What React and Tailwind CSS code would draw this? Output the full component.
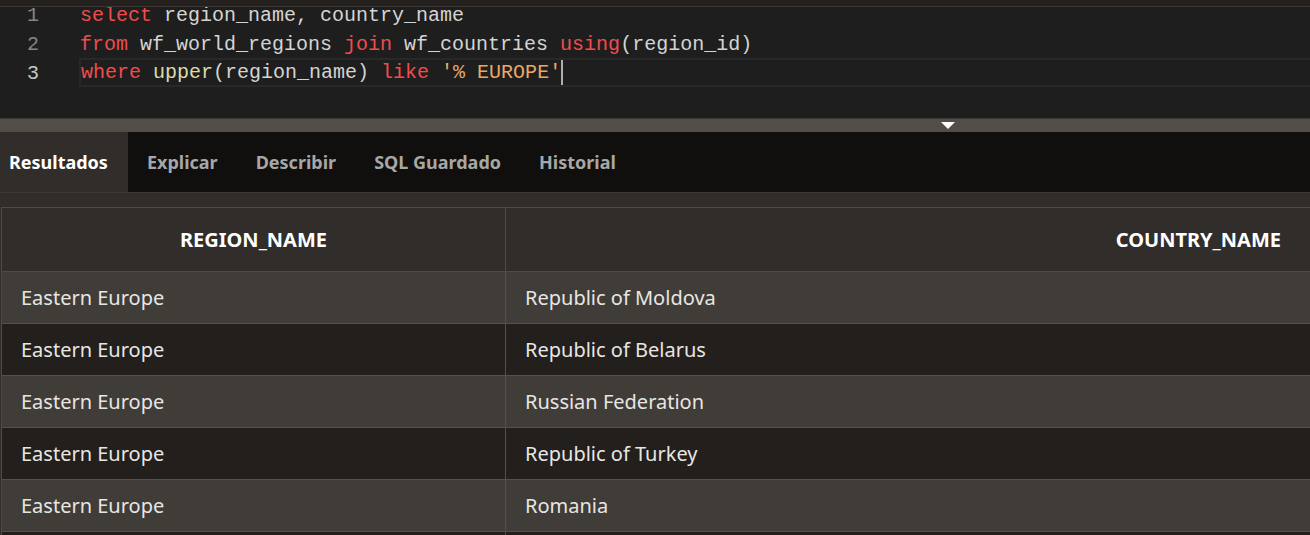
import React from "react";

const mono = { fontFamily: '"Liberation Mono", "DejaVu Sans Mono", monospace' };
const sans = { fontFamily: '"Noto Sans", "Open Sans", sans-serif' };

const K = ({ children }) => <span className="text-[#f14c4c]">{children}</span>;
const I = ({ children }) => <span className="text-[#d4d4d4]">{children}</span>;

const rows = [
  ["Eastern Europe", "Republic of Moldova"],
  ["Eastern Europe", "Republic of Belarus"],
  ["Eastern Europe", "Russian Federation"],
  ["Eastern Europe", "Republic of Turkey"],
  ["Eastern Europe", "Romania"],
  ["", ""],
];

export default function App() {
  return (
    <div className="w-[1310px] h-[535px] overflow-hidden bg-[#312d2a] flex flex-col">
      {/* Editor */}
      <div className="h-[118px] bg-[#1e1e1e] flex flex-col shrink-0 relative">
        <div className="h-[7px] bg-[#24211f] border-b border-[#3a3734] relative z-10 shrink-0" />
        <div className="-mt-[6px] text-[20px] leading-[29px]" style={mono}>
          <div className="flex h-[29px]">
            <div className="w-[39px] text-right text-[#858585]">1</div>
            <div className="ml-[41px] whitespace-pre">
              <K>select</K><I> region_name, country_name</I>
            </div>
          </div>
          <div className="flex h-[29px]">
            <div className="w-[39px] text-right text-[#858585]">2</div>
            <div className="ml-[41px] whitespace-pre">
              <K>from</K><I> wf_world_regions </I><K>join</K><I> wf_countries </I><K>using</K><I>(region_id)</I>
            </div>
          </div>
          <div className="flex h-[29px] -mt-[1px]">
            <div className="w-[39px] text-right text-[#c6c6c6] pt-[1px]">3</div>
            <div className="ml-[40px] flex-1 border-2 border-r-0 border-[#282828] whitespace-pre leading-[25px] flex items-center">
              <K>where</K><I> </I><span className="text-[#dcdcaa]">upper</span><I>(region_name) </I><K>like</K><I> </I><span className="text-[#e9a866]">'% EUROPE'</span>
              <span className="inline-block w-[2px] h-[25px] bg-[#aeafad]" />
            </div>
          </div>
        </div>
      </div>

      {/* Splitter */}
      <div className="h-[14px] bg-[#524d47] border-t border-[#3e3a36] flex items-start pl-[941px] shrink-0">
        <svg width="14" height="8" viewBox="0 0 14 8" className="mt-[3px]">
          <polygon points="0,0 14,0 7,7" fill="#ffffff" />
        </svg>
      </div>

      {/* Tabs */}
      <div className="h-[60px] bg-[#100f0d] flex items-stretch shrink-0 text-[18px] font-bold" style={sans}>
        <div className="bg-[#312d2a] pl-[9px] pr-[20px] flex items-center text-white">Resultados</div>
        <div className="px-[19px] flex items-center text-[#a7a7a7]">Explicar</div>
        <div className="px-[19px] flex items-center text-[#a7a7a7]">Describir</div>
        <div className="px-[19px] flex items-center text-[#a7a7a7]">SQL Guardado</div>
        <div className="px-[19px] flex items-center text-[#a7a7a7]">Historial</div>
      </div>

      {/* Results */}
      <div className="border-t border-[#3d3936] pt-[14px] pl-[1px] flex-1 overflow-hidden" style={sans}>
        <div className="border-l border-t border-[#4f4b47] w-[1330px]">
          <div className="flex h-[64px] bg-[#312d2a] text-white font-bold text-[20px]">
            <div className="w-[504px] border-r border-b border-[#4f4b47] flex items-center justify-center">REGION_NAME</div>
            <div className="flex-1 border-b border-[#4f4b47] flex items-center justify-end pr-[50px]">COUNTRY_NAME</div>
          </div>
          {rows.map((r, i) => (
            <div
              key={i}
              className={`flex h-[52px] text-[20px] text-[#e8e6e3] ${i % 2 === 0 ? "bg-[#403c38]" : "bg-[#221f1d]"}`}
            >
              <div className="w-[504px] border-r border-b border-[#54504b] flex items-center pl-[19px]">{r[0]}</div>
              <div className="flex-1 border-b border-[#54504b] flex items-center pl-[19px]">{r[1]}</div>
            </div>
          ))}
        </div>
      </div>
    </div>
  );
}
